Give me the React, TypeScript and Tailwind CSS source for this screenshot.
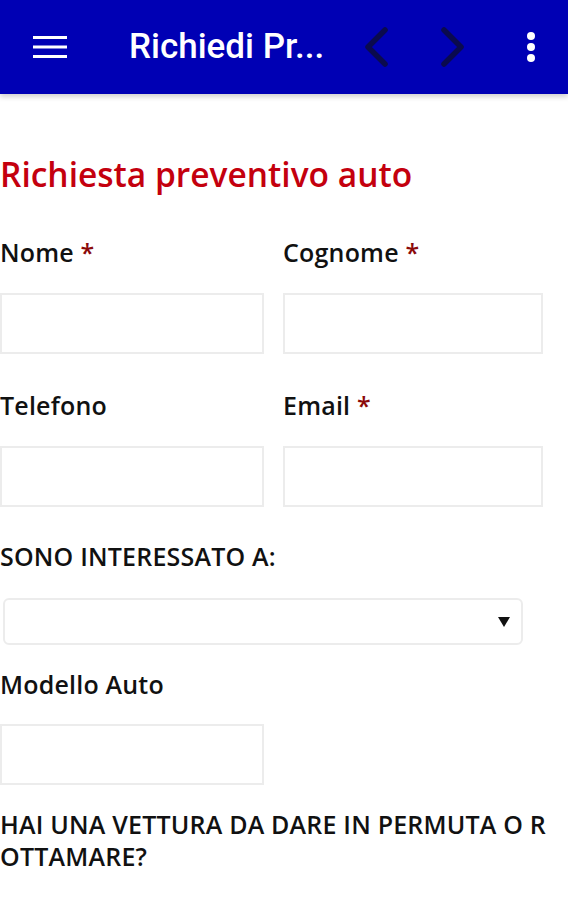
import React from "react";

const Label = ({ text, req }: { text: string; req?: boolean }) => (
  <div className="text-[25px] leading-[30px] font-semibold text-[#111] whitespace-nowrap tracking-[0.2px]">
    {text}
    {req && <span className="text-[#8b0a0a]"> *</span>}
  </div>
);

const Input = ({ w }: { w: string }) => (
  <div className={`${w} h-[61px] border-2 border-[#ececec] bg-white`} />
);

export default function App() {
  return (
    <div className="w-[568px] min-h-[900px] bg-white overflow-hidden" style={{ fontFamily: '"Open Sans", sans-serif' }}>
      <div className="relative z-10 h-[94px] bg-[#0000b4] flex items-center shadow-[0_3px_5px_rgba(0,0,0,0.18)]">
        <svg width="34" height="24" viewBox="0 0 34 24" className="ml-[33px]">
          <rect x="0" y="1" width="34" height="3" fill="#fff" />
          <rect x="0" y="10.5" width="34" height="3" fill="#fff" />
          <rect x="0" y="20" width="34" height="3" fill="#fff" />
        </svg>
        <div className="ml-[62px] text-white text-[35px] font-medium" style={{ fontFamily: "Roboto, sans-serif" }}>
          Richiedi Pr...
        </div>
        <svg width="30" height="40" viewBox="0 0 30 40" className="ml-auto">
          <path d="M24 3 L7 20 L24 37" fill="none" stroke="#0a0a4e" strokeWidth="5.5" strokeLinecap="round" strokeLinejoin="round" />
        </svg>
        <svg width="30" height="40" viewBox="0 0 30 40" className="ml-[45px]">
          <path d="M8 3 L25 20 L8 37" fill="none" stroke="#0a0a4e" strokeWidth="5.5" strokeLinecap="round" strokeLinejoin="round" />
        </svg>
        <svg width="10" height="32" viewBox="0 0 10 32" className="ml-[60px] mr-[32px]">
          <circle cx="5" cy="5" r="4" fill="#fff" />
          <circle cx="5" cy="16" r="4" fill="#fff" />
          <circle cx="5" cy="27" r="4" fill="#fff" />
        </svg>
      </div>

      <div className="pt-[60px]">
        <div className="text-[33.5px] leading-[40px] font-semibold text-[#c4000e]">
          Richiesta preventivo auto
        </div>

        <div className="mt-[43px] grid grid-cols-[264px_260px] gap-x-[19px]">
          <div>
            <Label text="Nome" req />
            <div className="mt-[26px]"><Input w="w-[264px]" /></div>
          </div>
          <div>
            <Label text="Cognome" req />
            <div className="mt-[26px]"><Input w="w-[260px]" /></div>
          </div>
        </div>

        <div className="mt-[36px] grid grid-cols-[264px_260px] gap-x-[19px]">
          <div>
            <Label text="Telefono" />
            <div className="mt-[26px]"><Input w="w-[264px]" /></div>
          </div>
          <div>
            <Label text="Email" req />
            <div className="mt-[26px]"><Input w="w-[260px]" /></div>
          </div>
        </div>

        <div className="mt-[34px]">
          <Label text="SONO INTERESSATO A:" />
          <div className="mt-[27px] ml-[3px] w-[520px] h-[47px] border-2 border-[#ececec] rounded-[6px] flex items-center justify-end pr-[11px]">
            <svg width="12" height="10" viewBox="0 0 12 10">
              <path d="M0 0 L12 0 L6 10 Z" fill="#111" />
            </svg>
          </div>
        </div>

        <div className="mt-[24px]">
          <Label text="Modello Auto" />
          <div className="mt-[25px]"><Input w="w-[264px]" /></div>
        </div>

        <div className="mt-[23px] w-[560px] text-[25px] leading-[32px] font-semibold text-[#111] break-all tracking-[0.2px]">
          HAI UNA VETTURA DA DARE IN PERMUTA O ROTTAMARE?
        </div>
      </div>
    </div>
  );
}
